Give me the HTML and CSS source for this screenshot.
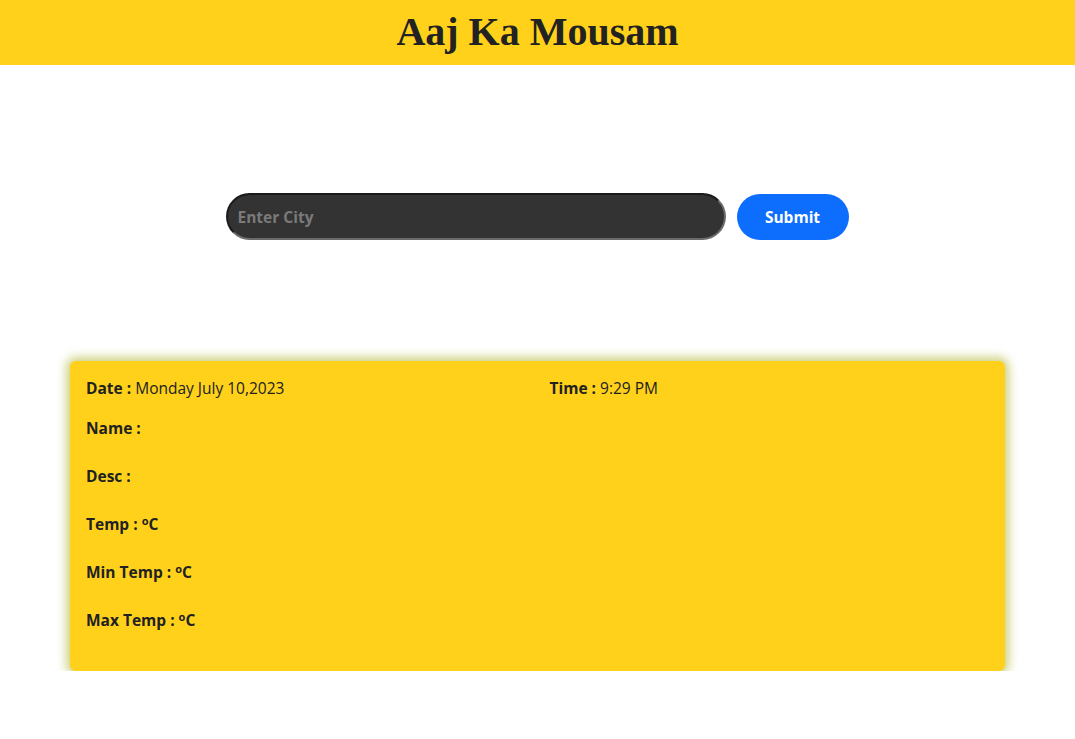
FILE: index.html
```html
<!DOCTYPE html>
<html>
<head>
<meta charset="utf-8">
<link rel="stylesheet" href="styles.css">
</head>
<body>
<header class="topbar"><h1 class="title">Aaj Ka Mousam</h1></header>
<main class="content">
  <form class="search">
    <input class="city" type="text" placeholder="Enter City">
    <button class="submit" type="button">Submit</button>
  </form>
  <section class="card">
    <div class="row">
      <p class="item"><b>Date :</b> Monday July 10,2023</p>
      <p class="item"><b>Time :</b> 9:29 PM</p>
    </div>
    <p class="item"><b>Name :</b></p>
    <p class="item"><b>Desc :</b></p>
    <p class="item"><b>Temp : <sup class="deg">o</sup>C</b></p>
    <p class="item"><b>Min Temp : <sup class="deg">o</sup>C</b></p>
    <p class="item"><b>Max Temp : <sup class="deg">o</sup>C</b></p>
  </section>
</main>
</body>
</html>
```

FILE: styles.css
```css
* { box-sizing: border-box; }
body {
  margin: 0;
  font-family: "Open Sans", "Noto Sans", sans-serif;
  color: #212121;
  background: #fff;
}
.topbar {
  background: #ffd11a;
  height: 65px;
  display: flex;
  align-items: center;
  justify-content: center;
}
.title {
  margin: 0 0 2px 0;
  font-family: "Liberation Serif", serif;
  font-weight: bold;
  font-size: 40px;
  color: #222;
}
.content {
  padding: 128px 70px 0 70px;
}
.search {
  display: flex;
  justify-content: center;
  gap: 11px;
  margin: 0 0 121px 0;
}
.city {
  width: 500px;
  height: 47px;
  margin-left: -1px;
  border-radius: 24px;
  background: #333;
  border: 2px solid #6b6b6b;
  border-top-color: #1a1a1a;
  border-left-color: #1a1a1a;
  padding: 0 10px;
  font-family: inherit;
  font-size: 15.5px;
  color: #ddd;
  outline: none;
}
.city::placeholder { color: #7a7a7a; font-weight: bold; }
.submit {
  width: 112px;
  height: 46px;
  margin-top: 1px;
  border: none;
  border-radius: 23px;
  background: #0d6efd;
  color: #fff;
  font-family: inherit;
  font-weight: bold;
  font-size: 15.5px;
}
.card {
  background: #ffd11a;
  border-radius: 6px;
  box-shadow: 0 0 10px 4px rgba(170, 175, 30, 0.55);
  padding: 15px 16px 16px 16px;
  height: 310px;
}
.row {
  display: grid;
  grid-template-columns: 1fr 1fr;
  column-gap: 24px;
}
.item {
  margin: 0 0 24px 0;
  font-size: 15.5px;
  line-height: 24px;
}
.row .item { margin-bottom: 16px; }
.deg {
  font-size: 11px;
  vertical-align: top;
  position: relative;
  top: -3px;
}
```
